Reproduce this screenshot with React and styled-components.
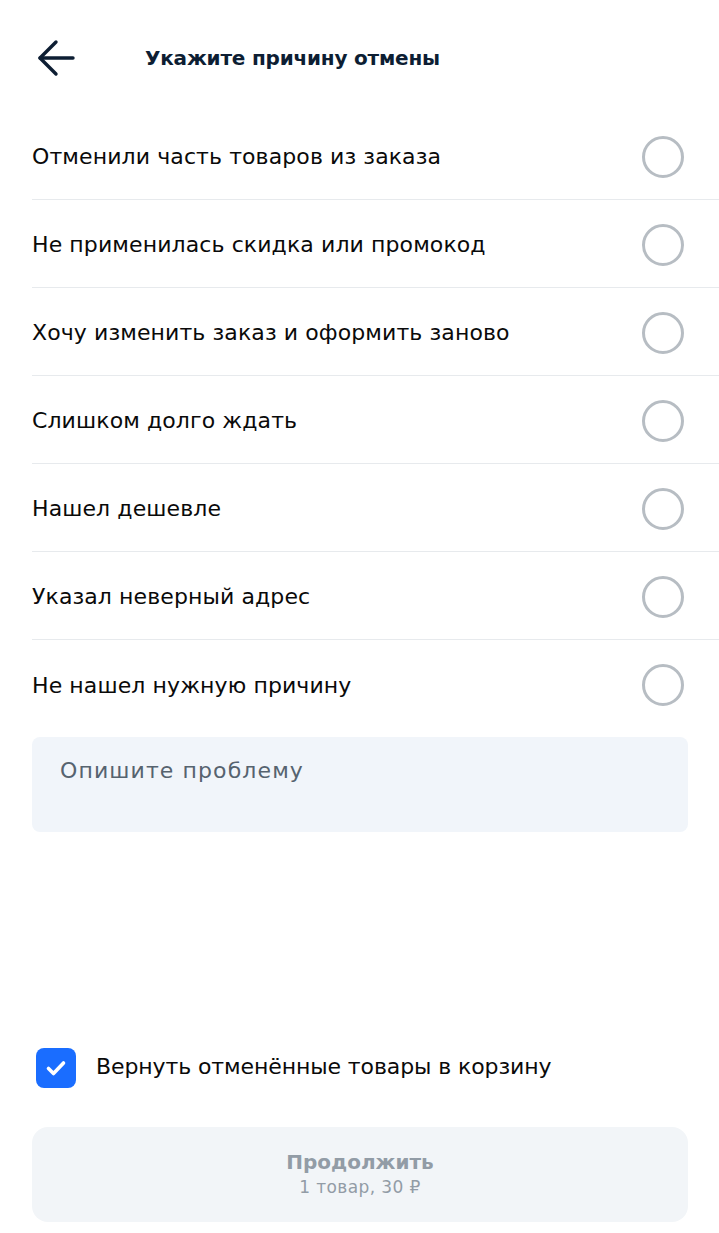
import React, { useState } from 'react';
import styled, { createGlobalStyle } from 'styled-components';

const GlobalStyle = createGlobalStyle`
    body {
        margin: 0;
        background: #ffffff;
        font-family: "DejaVu Sans", "Noto Sans", sans-serif;
    }
`;

const Page = styled.div`
    display: flex;
    flex-direction: column;
    min-height: 100vh;
    box-sizing: border-box;
    padding-bottom: 11px;
`;

const Header = styled.header`
    display: flex;
    align-items: center;
    height: 112px;
    padding: 4px 0 0 36px;
    box-sizing: border-box;
`;

const BackButton = styled.button`
    display: flex;
    align-items: center;
    justify-content: center;
    width: 40px;
    height: 40px;
    padding: 0;
    border: none;
    background: none;
    color: #0d1e33;
`;

const Title = styled.h1`
    margin: 0 0 0 69px;
    font-size: 20px;
    font-weight: 700;
    color: #0d1e33;
    letter-spacing: -0.2px;
`;

const List = styled.div`
    display: flex;
    flex-direction: column;
    padding-left: 32px;
`;

const Row = styled.label`
    display: flex;
    align-items: center;
    justify-content: space-between;
    height: 88px;
    padding: 2px 35px 0 0;
    box-sizing: border-box;
    border-bottom: ${p => (p.$last ? 'none' : '1px solid #e7eaed')};
    cursor: pointer;
`;

const RowText = styled.span`
    font-size: 22px;
    letter-spacing: 0.1px;
    color: #0a0a0a;
`;

const Radio = styled.span`
    width: 42px;
    height: 42px;
    box-sizing: border-box;
    border-radius: 50%;
    border: 3px solid ${p => (p.$checked ? '#1a6dff' : '#b7bdc3')};
`;

const Problem = styled.div`
    margin: 9px 31px 0 32px;
    height: 95px;
    border-radius: 8px;
    background: #f1f5fa;
    padding: 21px 28px;
    box-sizing: border-box;
    font-size: 22px;
    letter-spacing: 1.1px;
    color: #56636f;
`;

const Footer = styled.div`
    margin-top: auto;
    display: flex;
    flex-direction: column;
    gap: 39px;
    padding: 0 31px 0 32px;
`;

const CheckRow = styled.label`
    display: flex;
    align-items: center;
    gap: 20px;
    padding-left: 4px;
    cursor: pointer;
`;

const CheckBox = styled.span`
    display: flex;
    align-items: center;
    justify-content: center;
    width: 40px;
    height: 40px;
    border-radius: 8px;
    background: ${p => (p.$checked ? '#1a6dff' : '#ffffff')};
    border: ${p => (p.$checked ? 'none' : '3px solid #b7bdc3')};
    box-sizing: border-box;
`;

const CheckText = styled.span`
    font-size: 22px;
    letter-spacing: -0.1px;
    color: #0a0a0a;
    margin-top: -3px;
`;

const ContinueButton = styled.button`
    display: flex;
    flex-direction: column;
    align-items: center;
    justify-content: center;
    height: 95px;
    border: none;
    border-radius: 16px;
    background: #f2f5f8;
    font-family: inherit;
    color: #929ca6;
`;

const ButtonTitle = styled.span`
    font-size: 20px;
    font-weight: 700;
    line-height: 28px;
    margin-top: -4px;
`;

const ButtonSub = styled.span`
    font-size: 17px;
    letter-spacing: 0.4px;
    line-height: 22px;
`;

const reasons = [
    'Отменили часть товаров из заказа',
    'Не применилась скидка или промокод',
    'Хочу изменить заказ и оформить заново',
    'Слишком долго ждать',
    'Нашел дешевле',
    'Указал неверный адрес',
    'Не нашел нужную причину',
];

const App = () => {
    const [selected, setSelected] = useState(null);
    const [returnToCart, setReturnToCart] = useState(true);

    return (
        <Page>
            <GlobalStyle />
            <Header>
                <BackButton aria-label="Назад">
                    <svg width="38" height="38" viewBox="0 0 38 38" fill="none" stroke="currentColor" strokeWidth="3.4" strokeLinecap="round" strokeLinejoin="round">
                        <path d="M36 19H3" />
                        <path d="M19 3L3 19l16 16" />
                    </svg>
                </BackButton>
                <Title>Укажите причину отмены</Title>
            </Header>
            <List>
                {reasons.map((r, i) => (
                    <Row key={r} $last={i === reasons.length - 1} onClick={() => setSelected(i)}>
                        <RowText>{r}</RowText>
                        <Radio $checked={selected === i} />
                    </Row>
                ))}
            </List>
            <Problem>Опишите проблему</Problem>
            <Footer>
                <CheckRow onClick={() => setReturnToCart(!returnToCart)}>
                    <CheckBox $checked={returnToCart}>
                        {returnToCart && (
                            <svg width="26" height="26" viewBox="0 0 26 26" fill="none" stroke="#fff" strokeWidth="3.6" strokeLinecap="round" strokeLinejoin="round">
                                <path d="M5.5 13.5l5 5L20.5 8" />
                            </svg>
                        )}
                    </CheckBox>
                    <CheckText>Вернуть отменённые товары в корзину</CheckText>
                </CheckRow>
                <ContinueButton>
                    <ButtonTitle>Продолжить</ButtonTitle>
                    <ButtonSub>1 товар, 30 ₽</ButtonSub>
                </ContinueButton>
            </Footer>
        </Page>
    );
};

export default App;
